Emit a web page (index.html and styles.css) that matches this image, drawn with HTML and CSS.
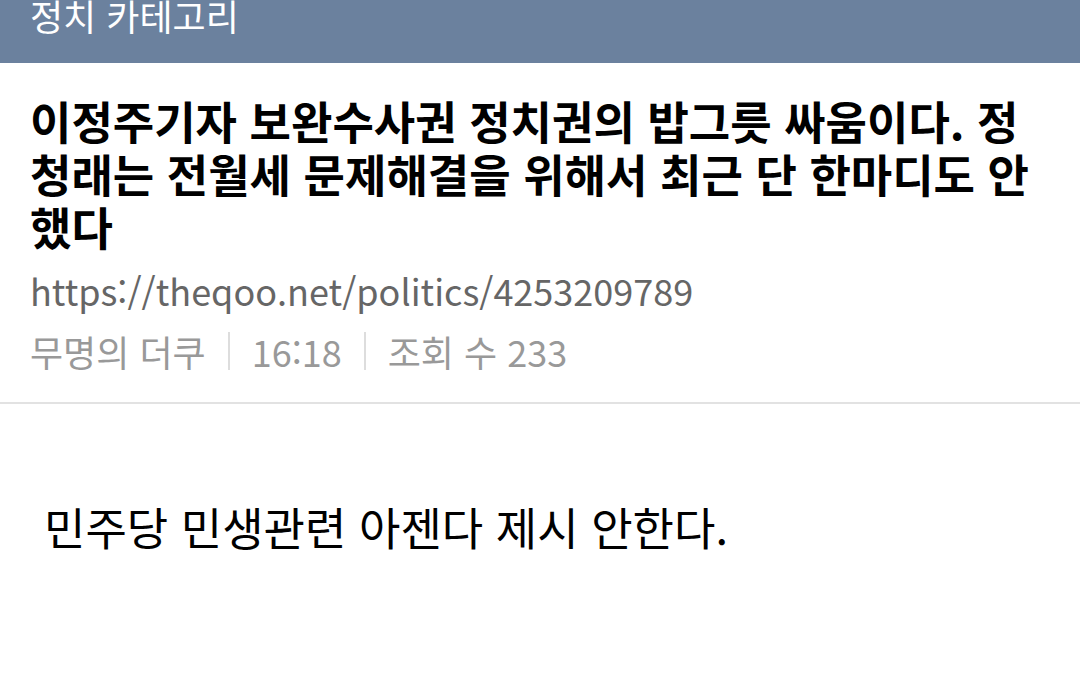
FILE: index.html
```html
<!DOCTYPE html>
<html lang="ko">
<head>
    <meta charset="UTF-8">
    <meta name="viewport" content="width=device-width, initial-scale=1.0">
    <title>정치 카테고리</title>
    <link rel="stylesheet" href="styles.css">
</head>
<body>
    <div class="topbar">
        <div class="topbar-title">정치 카테고리</div>
    </div>
    <div class="post-head">
        <h1 class="post-title">이정주기자 보완수사권 정치권의 밥그릇 싸움이다. 정청래는 전월세 문제해결을 위해서 최근 단 한마디도 안했다</h1>
        <div class="post-url">https://theqoo.net/politics/4253209789</div>
        <div class="post-meta">
            <span>무명의 더쿠</span>
            <span class="sep"></span>
            <span>16:18</span>
            <span class="sep"></span>
            <span>조회 수 233</span>
        </div>
    </div>
    <div class="post-body">
        <p>민주당 민생관련 아젠다 제시 안한다.</p>
    </div>
</body>
</html>
```

FILE: styles.css
```css
body {
    margin: 0;
    background: #fff;
    font-family: "Noto Sans CJK KR", "Noto Sans", sans-serif;
    overflow: hidden;
}
.topbar {
    background: #6b819e;
    height: 63px;
    padding: 0 30px;
    overflow: hidden;
}
.topbar-title {
    color: #fff;
    font-size: 36px;
    line-height: 36px;
    margin-top: -3px;
}
.post-head {
    padding: 0 30px;
    border-bottom: 2px solid #e2e2e2;
    height: 339px;
}
.post-title {
    margin: 0;
    padding-top: 31px;
    font-size: 45px;
    line-height: 53px;
    font-weight: bold;
    color: #000;
    word-break: break-all;
}
.post-url {
    margin-top: 15px;
    font-size: 36px;
    line-height: 44px;
    color: #666;
}
.post-meta {
    display: flex;
    align-items: center;
    gap: 22px;
    margin-top: 17px;
    font-size: 36px;
    line-height: 44px;
    color: #999;
}
.post-meta .sep {
    width: 2px;
    height: 38px;
    background: #ddd;
}
.post-body {
    padding: 0 44px;
}
.post-body p {
    margin: 96px 0 0;
    font-size: 45px;
    line-height: 54px;
    color: #000;
}
```
